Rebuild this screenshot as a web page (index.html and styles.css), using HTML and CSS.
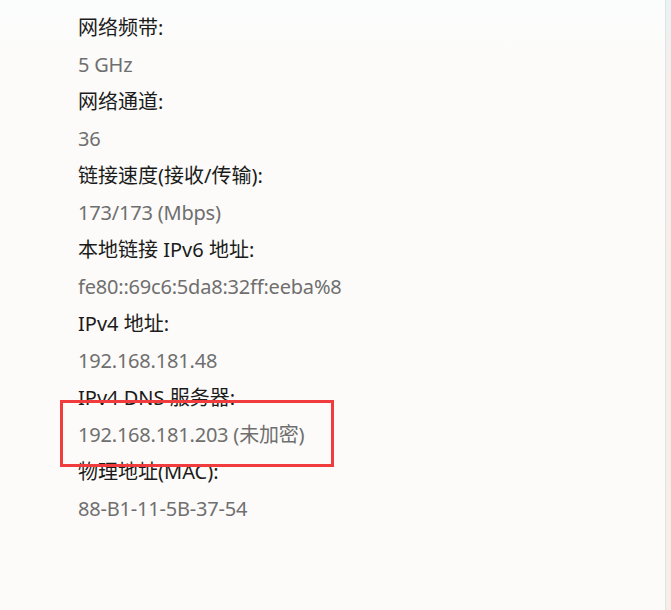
FILE: index.html
```html
<!DOCTYPE html>
<html lang="zh-CN">
<head>
<meta charset="utf-8">
<title>网络属性</title>
<link rel="stylesheet" href="styles.css">
</head>
<body>
<div class="page">
  <main class="content">
    <dl class="props">
      <dt>网络频带:</dt>
      <dd>5 GHz</dd>
      <dt>网络通道:</dt>
      <dd>36</dd>
      <dt>链接速度(接收/传输):</dt>
      <dd>173/173 (Mbps)</dd>
      <dt>本地链接 IPv6 地址:</dt>
      <dd>fe80::69c6:5da8:32ff:eeba%8</dd>
      <dt>IPv4 地址:</dt>
      <dd>192.168.181.48</dd>
      <dt>IPv4 DNS 服务器:</dt>
      <dd>192.168.181.203 (未加密)</dd>
      <dt>物理地址(MAC):</dt>
      <dd>88-B1-11-5B-37-54</dd>
    </dl>
    <div class="highlight" aria-hidden="true"></div>
  </main>
  <div class="scroll-edge"></div>
</div>
</body>
</html>
```

FILE: styles.css
```css
html, body {
  margin: 0;
  padding: 0;
  height: 100%;
}

body {
  font-family: "Noto Sans", "Noto Sans CJK SC", sans-serif;
  background: linear-gradient(180deg, #fbfcfc 0px, #fcfbf9 80px, #fcfbf9 100%);
  overflow: hidden;
}

.page {
  display: flex;
  height: 610px;
}

.content {
  flex: 1;
  position: relative;
  padding: 9px 0 0 78px;
}

.props {
  margin: 0;
  font-size: 20px;
  line-height: 37px;
}

.props dt {
  color: #1b1b1b;
  margin: 0;
}

.props dd {
  color: #6f6f6f;
  margin: 0;
  letter-spacing: -0.2px;
}

.highlight {
  position: absolute;
  left: 60px;
  top: 400px;
  width: 268px;
  height: 61px;
  border: 3px solid #f03c3c;
}

.scroll-edge {
  width: 5px;
  border-left: 1px solid #dfe3e5;
  background: linear-gradient(180deg, #eaf2f5 0px, #f4efe9 90px, #f7efe6 100%);
}
```
